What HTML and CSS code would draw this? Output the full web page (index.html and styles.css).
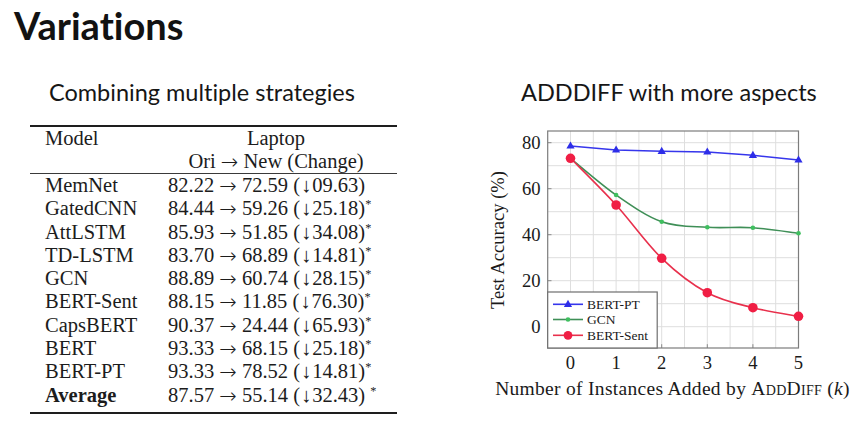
FILE: index.html
```html
<!DOCTYPE html>
<html lang="en">
<head>
<meta charset="utf-8">
<title>Variations</title>
<link rel="stylesheet" href="styles.css">
</head>
<body>
<h1 class="title">Variations</h1>
<main class="cols">
  <section class="left">
    <h2 class="sub sub-left">Combining multiple strategies</h2>
    <table class="res">
      <thead>
        <tr><th class="c-model">Model</th><th class="c-val">Laptop</th></tr>
        <tr class="h2row"><th class="c-model"></th><th class="c-val">Ori <span class="ar">→</span> New (Change)</th></tr>
      </thead>
      <tbody>
        <tr><td class="c-model">MemNet</td><td class="c-val">82.22 <span class="ar">→</span> 72.59 (<span class="dn">↓</span>09.63)</td></tr>
        <tr><td class="c-model">GatedCNN</td><td class="c-val">84.44 <span class="ar">→</span> 59.26 (<span class="dn">↓</span>25.18)<sup class="ast">*</sup></td></tr>
        <tr><td class="c-model">AttLSTM</td><td class="c-val">85.93 <span class="ar">→</span> 51.85 (<span class="dn">↓</span>34.08)<sup class="ast">*</sup></td></tr>
        <tr><td class="c-model">TD-LSTM</td><td class="c-val">83.70 <span class="ar">→</span> 68.89 (<span class="dn">↓</span>14.81)<sup class="ast">*</sup></td></tr>
        <tr><td class="c-model">GCN</td><td class="c-val">88.89 <span class="ar">→</span> 60.74 (<span class="dn">↓</span>28.15)<sup class="ast">*</sup></td></tr>
        <tr><td class="c-model">BERT-Sent</td><td class="c-val">88.15 <span class="ar">→</span> 11.85 (<span class="dn">↓</span>76.30)<sup class="ast">*</sup></td></tr>
        <tr><td class="c-model">CapsBERT</td><td class="c-val">90.37 <span class="ar">→</span> 24.44 (<span class="dn">↓</span>65.93)<sup class="ast">*</sup></td></tr>
        <tr><td class="c-model">BERT</td><td class="c-val">93.33 <span class="ar">→</span> 68.15 (<span class="dn">↓</span>25.18)<sup class="ast">*</sup></td></tr>
        <tr><td class="c-model">BERT-PT</td><td class="c-val">93.33 <span class="ar">→</span> 78.52 (<span class="dn">↓</span>14.81)<sup class="ast">*</sup></td></tr>
        <tr class="last"><td class="c-model avg">Average</td><td class="c-val">87.57 <span class="ar">→</span> 55.14 (<span class="dn">↓</span>32.43) <sup class="ast">*</sup></td></tr>
      </tbody>
    </table>
  </section>
  <section class="right">
    <h2 class="sub sub-right">ADDDIFF with more aspects</h2>
    <svg class="chart" width="385" height="300" viewBox="480 106 385 300" xmlns="http://www.w3.org/2000/svg">
      <rect class="plot-bg" x="547.7" y="131" width="250.8" height="217"/>
      <g class="grid">
        <line x1="570.5" y1="131" x2="570.5" y2="348"/>
        <line x1="593.3" y1="131" x2="593.3" y2="348"/>
        <line x1="616.1" y1="131" x2="616.1" y2="348"/>
        <line x1="638.9" y1="131" x2="638.9" y2="348"/>
        <line x1="661.7" y1="131" x2="661.7" y2="348"/>
        <line x1="684.5" y1="131" x2="684.5" y2="348"/>
        <line x1="707.3" y1="131" x2="707.3" y2="348"/>
        <line x1="730.1" y1="131" x2="730.1" y2="348"/>
        <line x1="752.9" y1="131" x2="752.9" y2="348"/>
        <line x1="775.7" y1="131" x2="775.7" y2="348"/>
        <line x1="547.7" y1="142.7" x2="798.5" y2="142.7"/>
        <line x1="547.7" y1="165.7" x2="798.5" y2="165.7"/>
        <line x1="547.7" y1="188.7" x2="798.5" y2="188.7"/>
        <line x1="547.7" y1="211.7" x2="798.5" y2="211.7"/>
        <line x1="547.7" y1="234.7" x2="798.5" y2="234.7"/>
        <line x1="547.7" y1="257.7" x2="798.5" y2="257.7"/>
        <line x1="547.7" y1="280.7" x2="798.5" y2="280.7"/>
        <line x1="547.7" y1="303.7" x2="798.5" y2="303.7"/>
        <line x1="547.7" y1="326.7" x2="798.5" y2="326.7"/>
      </g>
      <g class="ticks">
        <line x1="547.7" y1="142.7" x2="551.5" y2="142.7"/>
        <line x1="547.7" y1="188.7" x2="551.5" y2="188.7"/>
        <line x1="547.7" y1="234.7" x2="551.5" y2="234.7"/>
        <line x1="547.7" y1="280.7" x2="551.5" y2="280.7"/>
        <line x1="547.7" y1="326.7" x2="551.5" y2="326.7"/>
        <line x1="570.5" y1="348" x2="570.5" y2="344.2"/>
        <line x1="616.1" y1="348" x2="616.1" y2="344.2"/>
        <line x1="661.7" y1="348" x2="661.7" y2="344.2"/>
        <line x1="707.3" y1="348" x2="707.3" y2="344.2"/>
        <line x1="752.9" y1="348" x2="752.9" y2="344.2"/>
      </g>
      <rect class="frame" x="547.7" y="131" width="250.8" height="217"/>

      <polyline class="s-blue" points="570.5,146 616.1,150 661.7,151.3 707.3,152 752.9,155.3 798.5,160"/>
      <g class="m-blue">
        <polygon points="570.5,141.5 566.4,148.6 574.6,148.6"/>
        <polygon points="616.1,145.5 612,152.6 620.2,152.6"/>
        <polygon points="661.7,146.8 657.6,153.9 665.8,153.9"/>
        <polygon points="707.3,147.5 703.2,154.6 711.4,154.6"/>
        <polygon points="752.9,150.8 748.8,157.9 757,157.9"/>
        <polygon points="798.5,155.5 794.4,162.6 802.6,162.6"/>
      </g>

      <path class="s-green" d="M570.5,158.3 C578.1,164.4 600.9,184.4 616.1,195 C631.3,205.6 646.5,216.3 661.7,221.7 C676.9,227.1 692.1,226.3 707.3,227.3 C722.5,228.3 737.7,226.7 752.9,227.7 C768.1,228.7 790.9,232.4 798.5,233.3"/>
      <g class="m-green">
        <circle cx="570.5" cy="158.3" r="2.3"/>
        <circle cx="616.1" cy="195" r="2.3"/>
        <circle cx="661.7" cy="221.7" r="2.3"/>
        <circle cx="707.3" cy="227.3" r="2.3"/>
        <circle cx="752.9" cy="227.7" r="2.3"/>
        <circle cx="798.5" cy="233.3" r="2.3"/>
      </g>

      <path class="s-red" d="M570.5,158.3 C578.1,166.1 600.9,188.3 616.1,205 C631.3,221.7 646.5,243.7 661.7,258.3 C676.9,272.9 692.1,284.5 707.3,292.7 C722.5,300.9 737.7,303.8 752.9,307.7 C768.1,311.6 790.9,314.9 798.5,316.3"/>
      <g class="m-red">
        <circle cx="570.5" cy="158.3" r="4.8"/>
        <circle cx="616.1" cy="205" r="4.8"/>
        <circle cx="661.7" cy="258.3" r="4.8"/>
        <circle cx="707.3" cy="292.7" r="4.8"/>
        <circle cx="752.9" cy="307.7" r="4.8"/>
        <circle cx="798.5" cy="316.3" r="4.8"/>
      </g>

      <g class="legend">
        <rect class="legend-box" x="547.7" y="292" width="109.5" height="56"/>
        <line class="s-blue" x1="553" y1="304.3" x2="583" y2="304.3"/>
        <polygon class="m-blue" points="568,299.8 563.9,306.9 572.1,306.9"/>
        <text class="lg-text" x="587" y="308.8">BERT-PT</text>
        <line class="s-green" x1="553" y1="319.5" x2="583" y2="319.5"/>
        <circle class="m-green" cx="568" cy="319.5" r="2.3"/>
        <text class="lg-text" x="587" y="324">GCN</text>
        <line class="s-red" x1="553" y1="335.3" x2="583" y2="335.3"/>
        <circle class="m-red" cx="568" cy="335.3" r="4.4"/>
        <text class="lg-text" x="587" y="339.8">BERT-Sent</text>
      </g>

      <g class="tick-text">
        <text class="yt" x="540.5" y="149">80</text>
        <text class="yt" x="540.5" y="195">60</text>
        <text class="yt" x="540.5" y="241">40</text>
        <text class="yt" x="540.5" y="287">20</text>
        <text class="yt" x="540.5" y="333">0</text>
        <text class="xt" x="570.5" y="369.3">0</text>
        <text class="xt" x="616.1" y="369.3">1</text>
        <text class="xt" x="661.7" y="369.3">2</text>
        <text class="xt" x="707.3" y="369.3">3</text>
        <text class="xt" x="752.9" y="369.3">4</text>
        <text class="xt" x="798.5" y="369.3">5</text>
      </g>
      <text class="axis-label y-label" transform="translate(504 240) rotate(-90)" x="0" y="0">Test Accuracy (%)</text>
      <text class="axis-label x-label" x="672.5" y="395">Number of Instances Added by <tspan class="sc">AddDiff</tspan> (<tspan class="it">k</tspan>)</text>
    </svg>
  </section>
</main>
</body>
</html>
```

FILE: styles.css
```css
html, body {
  margin: 0;
  padding: 0;
  background: #ffffff;
}

body {
  width: 865px;
  height: 431px;
  overflow: hidden;
  font-family: "Lato", "Open Sans", sans-serif;
  color: #111;
  font-variant-ligatures: none;
}

.title {
  margin: 0;
  padding: 3px 0 0 14px;
  height: 44px;
  font-family: "Lato", sans-serif;
  font-weight: 700;
  font-size: 38px;
  line-height: 44px;
  color: #121212;
  font-variant-ligatures: none;
  font-feature-settings: "liga" 0, "dlig" 0;
}

.cols {
  display: flex;
  margin-top: 31px;
  padding-left: 30px;
}

.left {
  width: 450px;
  flex: none;
}

.right {
  flex: 1;
}

.sub {
  margin: 0;
  font-family: "Lato", sans-serif;
  font-weight: 400;
  font-size: 23.5px;
  line-height: 28px;
  color: #161616;
  font-feature-settings: "liga" 0, "dlig" 0;
}

.sub-left {
  padding-left: 19px;
}

.sub-right {
  padding-left: 41px;
}

.res {
  margin-top: 19px;
  width: 367px;
  border-collapse: collapse;
  border-top: 2px solid #1e1e1e;
  border-bottom: 2px solid #1e1e1e;
  font-family: "Liberation Serif", "Times New Roman", serif;
  font-size: 20.5px;
  color: #1c1c1c;
}

.res th,
.res td {
  padding: 0;
  font-weight: 400;
  white-space: nowrap;
}

.res thead tr {
  line-height: 23px;
}

.res thead .h2row {
  border-bottom: 1.3px solid #3a3a3a;
}

.res tbody tr {
  line-height: 23.3px;
}

.res .last td {
  padding-bottom: 5px;
}

.c-model {
  width: 123px;
  padding-left: 15px !important;
  text-align: left;
}

.res th.c-val {
  text-align: center;
  padding-right: 13px !important;
}

.res td.c-val {
  text-align: left;
}

.avg {
  font-weight: 700 !important;
}

.ar {
  font-family: "DejaVu Sans", sans-serif;
  font-size: 1.02em;
  line-height: 0;
  font-weight: 300;
  position: relative;
  top: 1px;
}

.dn {
  font-family: "Liberation Serif", "Times New Roman", serif;
  line-height: 0;
  margin-left: 1px;
  margin-right: 1px;
}

.ast {
  font-size: 0.6em;
  line-height: 0;
  vertical-align: 0.6em;
}

.chart {
  display: block;
}

.plot-bg {
  fill: #ffffff;
}

.grid line {
  stroke: #dedede;
  stroke-width: 1;
}

.ticks line {
  stroke: #8a8a8a;
  stroke-width: 1;
}

.frame {
  fill: none;
  stroke: #7c7c7c;
  stroke-width: 1.2;
}

.s-blue {
  fill: none;
  stroke: #3636ec;
  stroke-width: 1.6;
}

.m-blue {
  fill: #2d2de8;
}

.s-green {
  fill: none;
  stroke: #3f8f57;
  stroke-width: 1.6;
}

.m-green {
  fill: #3fbf5f;
}

.s-red {
  fill: none;
  stroke: #e8304c;
  stroke-width: 1.6;
}

.m-red {
  fill: #f01e44;
}

.legend-box {
  fill: #ffffff;
  stroke: #6e6e6e;
  stroke-width: 1.2;
}

.lg-text {
  font-family: "Liberation Serif", "Times New Roman", serif;
  font-size: 13.5px;
  fill: #1a1a1a;
}

.tick-text text {
  font-family: "Liberation Serif", "Times New Roman", serif;
  font-size: 18.6px;
  fill: #1a1a1a;
}

.yt {
  text-anchor: end;
}

.xt {
  text-anchor: middle;
}

.axis-label {
  font-family: "Liberation Serif", "Times New Roman", serif;
  font-size: 18.6px;
  fill: #1a1a1a;
  text-anchor: middle;
}

.x-label {
  font-size: 19.5px;
  letter-spacing: 0.3px;
}

.sc {
  font-variant: small-caps;
}

.it {
  font-style: italic;
}
```
